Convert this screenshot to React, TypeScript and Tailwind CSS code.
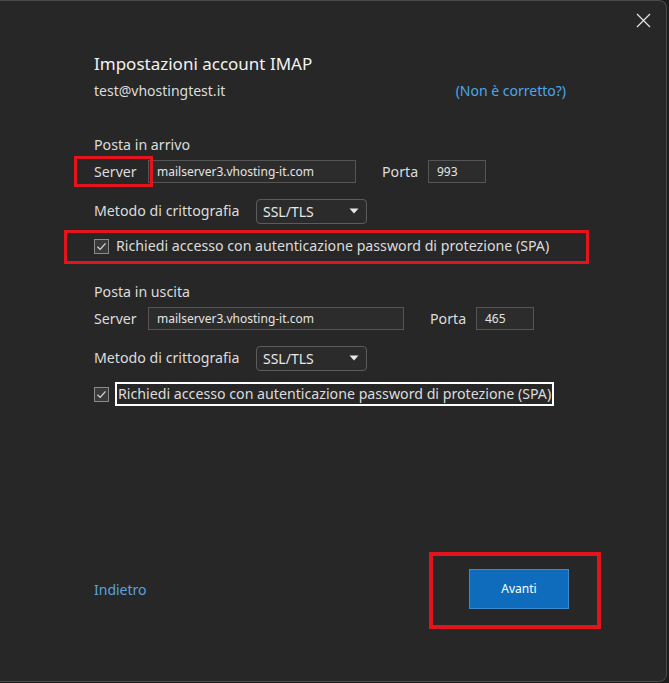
import React from "react";

const font = { fontFamily: '"Noto Sans", "Open Sans", sans-serif' };

function Check() {
  return (
    <div className="w-[15px] h-[15px] border border-[#8a8a8a] bg-[#3a3a3a] flex items-center justify-center shrink-0">
      <svg width="11" height="11" viewBox="0 0 11 11">
        <path d="M1.5 5.8 L4.2 8.4 L9.5 2.4" fill="none" stroke="#d8d8d8" strokeWidth="1.3" />
      </svg>
    </div>
  );
}

function Select() {
  return (
    <div className="w-[111px] h-[25px] border border-[#5c5c5c] rounded-[4px] bg-[#2b2b2b] flex items-center justify-between pl-[6px] pr-[7px]">
      <span className="text-[14px] text-[#e8e8e8]">SSL/TLS</span>
      <svg width="10" height="6" viewBox="0 0 10 6">
        <path d="M0.5 0.5 L9.5 0.5 L5 5.5 Z" fill="#e8e8e8" />
      </svg>
    </div>
  );
}

function Input({ value, w }: { value: string; w: string }) {
  return (
    <div className={`${w} h-[23px] border border-[#555555] bg-[#2c2c2c] flex items-center pl-[8px]`}>
      <span className="text-[12px] text-[#e4e4e4]">{value}</span>
    </div>
  );
}

export default function App() {
  return (
    <div className="w-[669px] h-[683px] bg-[#1c1c1c]" style={font}>
      <div className="relative w-[667px] h-[682px] bg-[#272727] border-t border-r border-b border-[#4a4a4a] rounded-tr-[8px] rounded-br-[8px] flex flex-col pl-[94px] pt-[49px] pb-[72px] text-[#dcdcdc]">
        {/* close */}
        <svg className="absolute right-[15px] top-[12px]" width="15" height="15" viewBox="0 0 15 15">
          <path d="M1 1 L14 14 M14 1 L1 14" stroke="#e6e6e6" strokeWidth="1.2" />
        </svg>

        <div className="h-[28px] flex items-center text-[17px] text-[#f2f2f2]">Impostazioni account IMAP</div>
        <div className="h-[22px] mt-[1px] flex items-center justify-between w-[472px] text-[14px]">
          <span>test@vhostingtest.it</span>
          <span className="text-[#4ea6ea]">(Non è corretto?)</span>
        </div>

        <div className="h-[22px] mt-[33px] flex items-center text-[14.2px]">Posta in arrivo</div>
        <div className="relative h-[25px] mt-[3px] flex items-center text-[14.2px]">
          <span className="w-[54px]">Server</span>
          <Input value="mailserver3.vhosting-it.com" w="w-[208px]" />
          <span className="ml-[26px] w-[46px]">Porta</span>
          <Input value="993" w="w-[58px]" />
          <div className="absolute left-[-20px] top-[-3px] w-[79px] h-[31px] border-[3px] border-[#e3141c]" />
        </div>
        <div className="h-[26px] mt-[14px] flex items-center text-[14.2px]">
          <span className="w-[162px]">Metodo di crittografia</span>
          <Select />
        </div>
        <div className="relative h-[26px] mt-[9px] flex items-center text-[14.2px]">
          <Check />
          <span className="ml-[7px]">Richiedi accesso con autenticazione password di protezione (SPA)</span>
          <div className="absolute left-[-30px] top-[-3px] w-[525px] h-[34px] border-[3px] border-[#e3141c]" />
        </div>

        <div className="h-[22px] mt-[22px] flex items-center text-[14.2px]">Posta in uscita</div>
        <div className="h-[25px] mt-[3px] flex items-center text-[14.2px]">
          <span className="w-[54px]">Server</span>
          <Input value="mailserver3.vhosting-it.com" w="w-[256px]" />
          <span className="ml-[26px] w-[46px]">Porta</span>
          <Input value="465" w="w-[58px]" />
        </div>
        <div className="h-[26px] mt-[14px] flex items-center text-[14.2px]">
          <span className="w-[162px]">Metodo di crittografia</span>
          <Select />
        </div>
        <div className="h-[26px] mt-[10px] flex items-center text-[14.2px]">
          <Check />
          <span className="ml-[6px] border-[2px] border-white px-[1px] h-[24px] flex items-center">
            Richiedi accesso con autenticazione password di protezione (SPA)
          </span>
        </div>

        <div className="flex-1" />
        <div className="relative h-[40px] flex items-center justify-between w-[475px]">
          <span className="text-[14px] text-[#5aa3dc]">Indietro</span>
          <div className="w-[100px] h-[40px] bg-[#0f6cbd] border border-[#3d8ad0] flex items-center justify-center text-[12px] text-white">
            Avanti
          </div>
          <div className="absolute left-[335px] top-[-17px] w-[172px] h-[77px] border-[4px] border-[#e3141c]" />
        </div>
      </div>
    </div>
  );
}
